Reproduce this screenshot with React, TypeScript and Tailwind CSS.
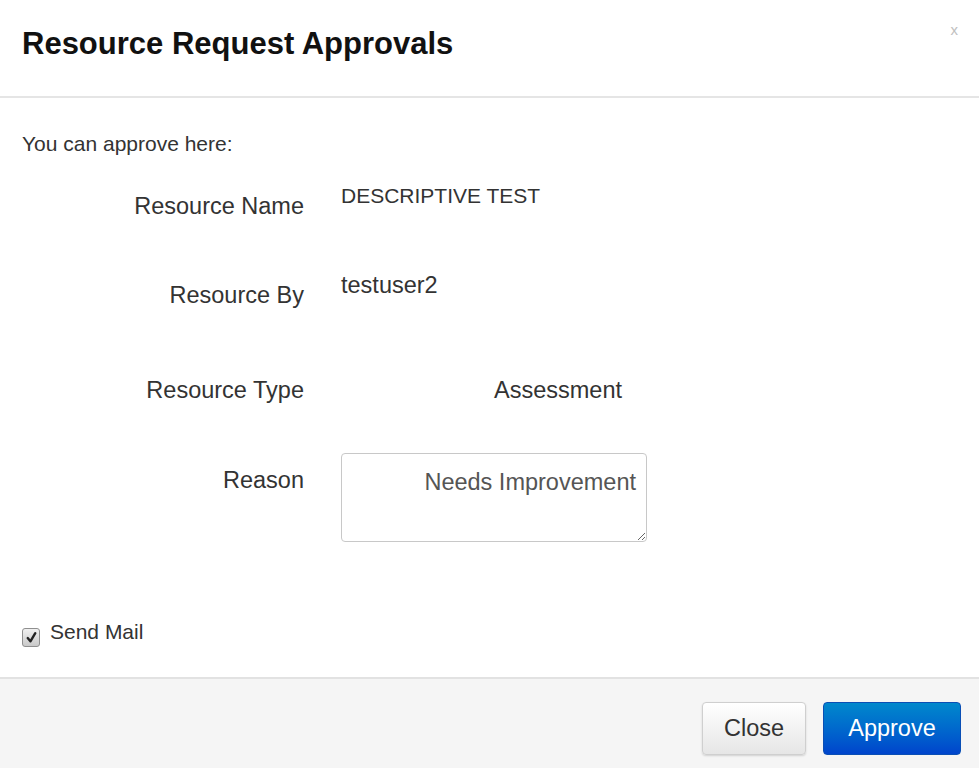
import { useState } from "react"

function CheckMark() {
  return (
    <svg viewBox="0 0 12 12" className="w-[13px] h-[13px]">
      <path d="M2.5 6.5 L5 9.5 L9.5 2" fill="none" stroke="#222" strokeWidth="2.2" strokeLinecap="round" strokeLinejoin="round" />
    </svg>
  )
}

export default function App() {
  const [sendMail, setSendMail] = useState(true)
  const [reason, setReason] = useState("Needs Improvement")

  return (
    <div className="w-[979px] h-[768px] bg-white flex flex-col text-[#333]" style={{ fontFamily: '"Liberation Sans", Arial, sans-serif' }}>
      {/* header */}
      <div className="h-[98px] border-b-2 border-[#e5e5e5] flex items-start justify-between pl-[22px] pr-[21px]">
        <h3 className="text-[31px] leading-[36px] font-bold text-[#111] mt-[26px]">Resource Request Approvals</h3>
        <button className="text-[#c0c0c0] text-[15px] leading-none mt-[22px]">x</button>
      </div>

      {/* body */}
      <div className="flex-1 flex flex-col pl-[22px]">
        <p className="text-[21px] leading-[24px] mt-[34px]">You can approve here:</p>

        <div className="flex h-[89px] mt-[28px]">
          <div className="w-[282px] text-right text-[23.5px] leading-[24px] pt-[10px]">Resource Name</div>
          <div className="ml-[37px] text-[21px] leading-[24px]">DESCRIPTIVE TEST</div>
        </div>

        <div className="flex h-[105px]">
          <div className="w-[282px] text-right text-[23.5px] leading-[24px] pt-[10px]">Resource By</div>
          <div className="ml-[37px] text-[23.5px] leading-[24px]">testuser2</div>
        </div>

        <div className="flex h-[75px]">
          <div className="w-[282px] text-right text-[23.5px] leading-[24px]">Resource Type</div>
          <div className="ml-[37px] pl-[153px] text-[23.5px] leading-[24px]">Assessment</div>
        </div>

        <div className="flex">
          <div className="w-[282px] text-right text-[23.5px] leading-[24px] pt-[15px]">Reason</div>
          <textarea
            value={reason}
            onChange={(e) => setReason(e.target.value)}
            className="ml-[37px] w-[306px] h-[89px] border border-[#c8c8c8] rounded-[4px] text-right text-[23.5px] leading-[24px] pt-[16px] pr-[10px] pl-[10px] text-[#555] outline-none"
          />
        </div>

        <label className="flex items-start mt-[78px] cursor-pointer" onClick={() => setSendMail(!sendMail)}>
          <span className="w-[18px] h-[19px] mt-[8px] rounded-[3px] border border-[#8f8f8f] bg-gradient-to-b from-[#f0f0f0] to-[#c9c9c9] flex items-center justify-center">
            {sendMail && <CheckMark />}
          </span>
          <span className="ml-[10px] text-[21px] leading-[24px]">Send Mail</span>
        </label>
      </div>

      {/* footer */}
      <div className="h-[91px] border-t-2 border-[#e2e2e2] bg-[#f5f5f5] flex items-start justify-end gap-[17px] pr-[18px] pt-[23px]">
        <button className="w-[104px] h-[53px] rounded-[4px] border border-[#cfcfcf] bg-gradient-to-b from-white to-[#e6e6e6] shadow-[0_1px_2px_rgba(0,0,0,0.15)] text-[23.5px] text-[#333]">
          Close
        </button>
        <button className="w-[138px] h-[53px] rounded-[4px] border border-[#0a4fb5] bg-gradient-to-b from-[#0088cc] to-[#0044cc] text-[23.5px] text-white">
          Approve
        </button>
      </div>
    </div>
  )
}
